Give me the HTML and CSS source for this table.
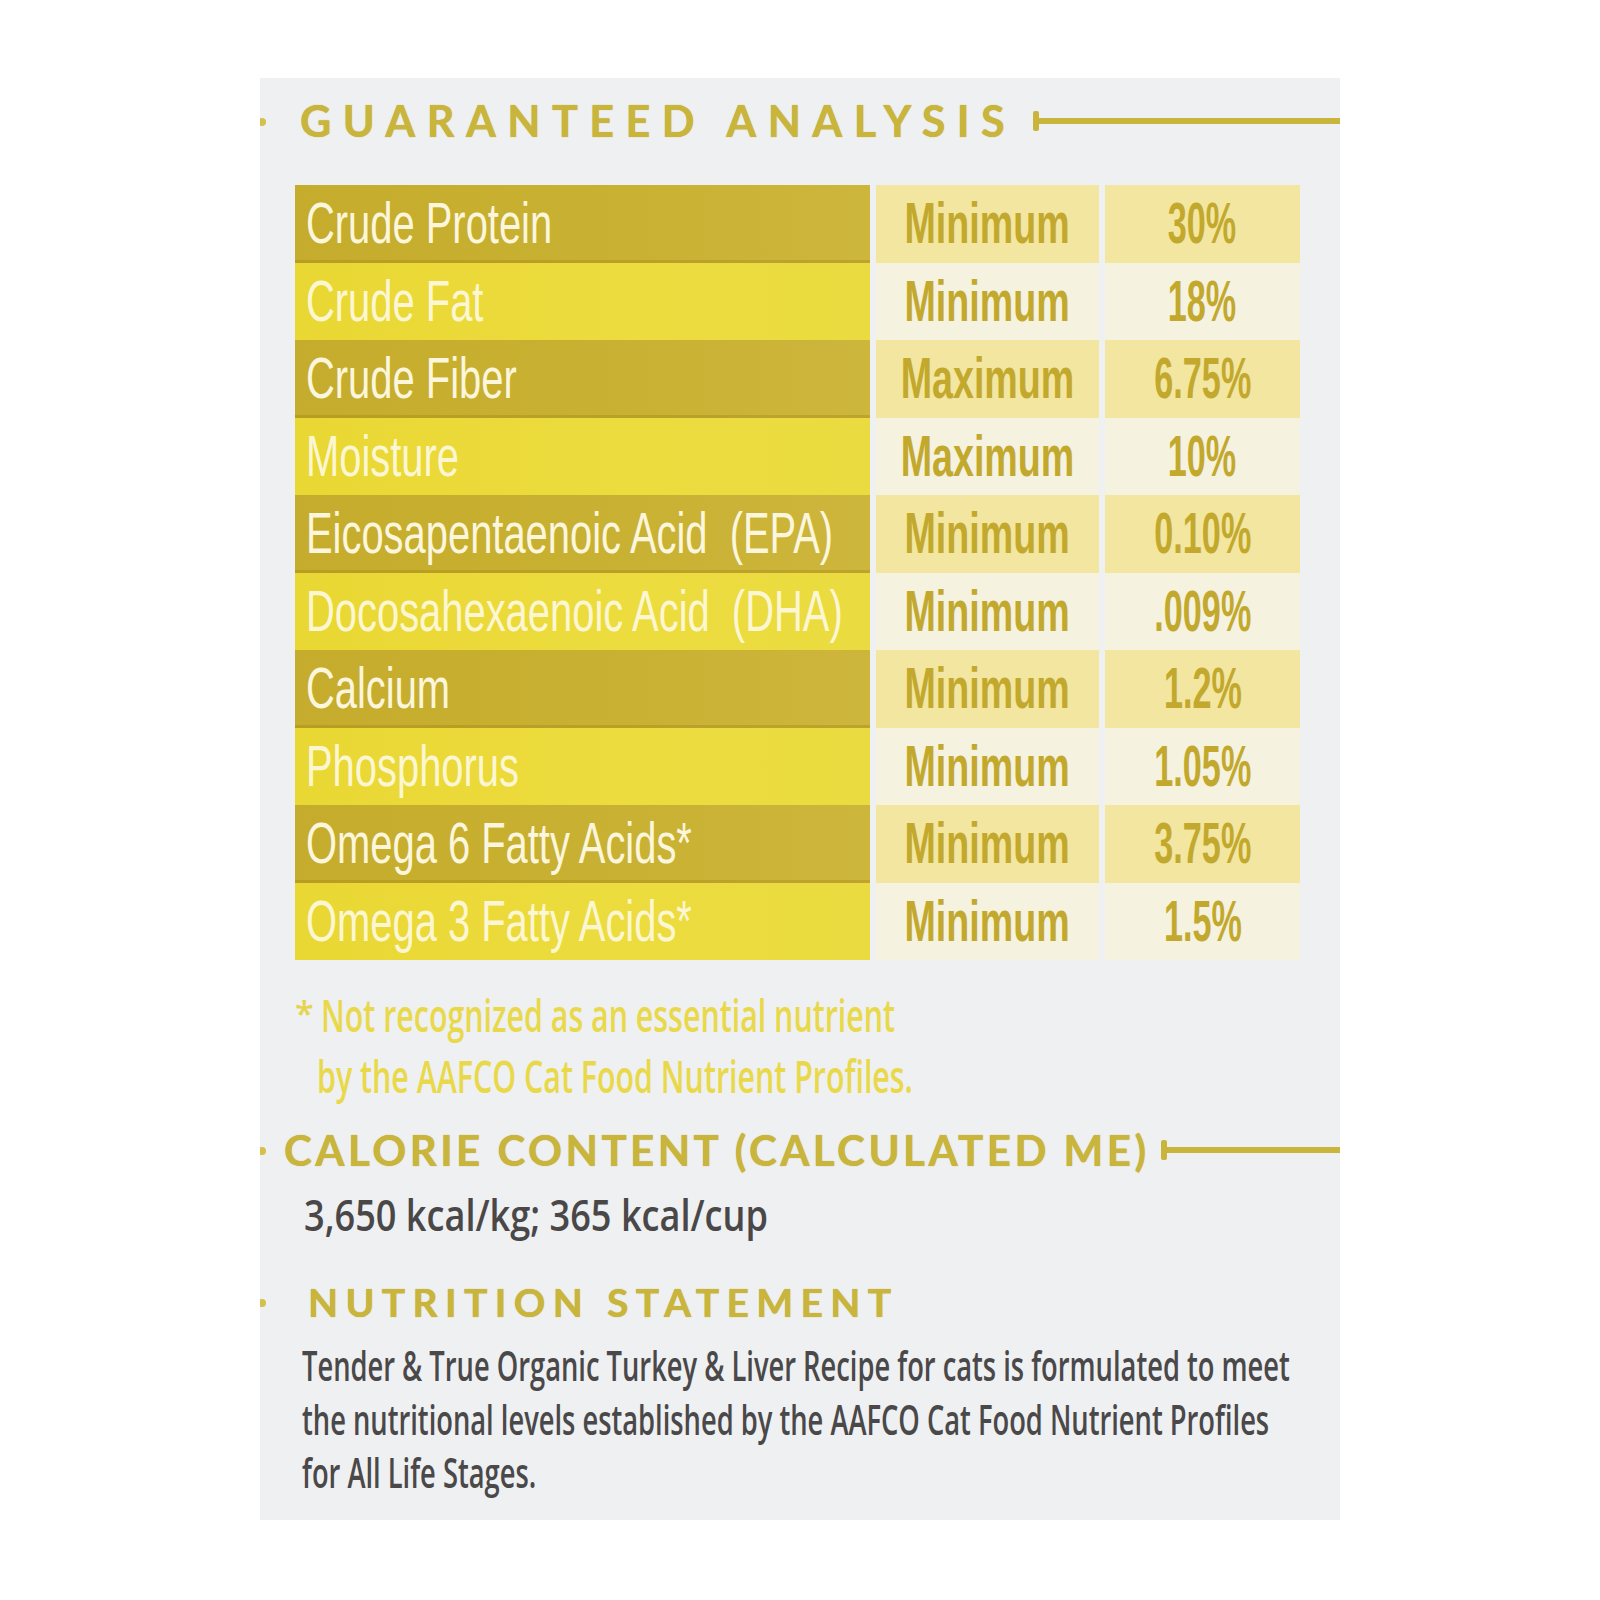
FILE: index.html
```html
<!DOCTYPE html>
<html lang="en">
<head>
<meta charset="utf-8">
<title>Guaranteed Analysis</title>
<link rel="stylesheet" href="styles.css">
</head>
<body>
<div class="panel">
  <div class="heading heading-ga">
    <span class="heading-text">GUARANTEED ANALYSIS</span>
    <span class="rule rule-ga"></span>
  </div>

  <div class="analysis">
    <div class="row dark"><div class="name"><span>Crude Protein</span></div><div class="kind"><span>Minimum</span></div><div class="val"><span>30%</span></div></div>
    <div class="row light"><div class="name"><span>Crude Fat</span></div><div class="kind"><span>Minimum</span></div><div class="val"><span>18%</span></div></div>
    <div class="row dark"><div class="name"><span>Crude Fiber</span></div><div class="kind"><span>Maximum</span></div><div class="val"><span>6.75%</span></div></div>
    <div class="row light"><div class="name"><span>Moisture</span></div><div class="kind"><span>Maximum</span></div><div class="val"><span>10%</span></div></div>
    <div class="row dark"><div class="name"><span>Eicosapentaenoic Acid&nbsp; (EPA)</span></div><div class="kind"><span>Minimum</span></div><div class="val"><span>0.10%</span></div></div>
    <div class="row light"><div class="name"><span>Docosahexaenoic Acid&nbsp; (DHA)</span></div><div class="kind"><span>Minimum</span></div><div class="val"><span>.009%</span></div></div>
    <div class="row dark"><div class="name"><span>Calcium</span></div><div class="kind"><span>Minimum</span></div><div class="val"><span>1.2%</span></div></div>
    <div class="row light"><div class="name"><span>Phosphorus</span></div><div class="kind"><span>Minimum</span></div><div class="val"><span>1.05%</span></div></div>
    <div class="row dark"><div class="name"><span>Omega 6 Fatty Acids*</span></div><div class="kind"><span>Minimum</span></div><div class="val"><span>3.75%</span></div></div>
    <div class="row light"><div class="name"><span>Omega 3 Fatty Acids*</span></div><div class="kind"><span>Minimum</span></div><div class="val"><span>1.5%</span></div></div>
  </div>

  <div class="footnote">
    <div class="foot-line first"><span class="ast">*</span><span class="sx">Not recognized as an essential nutrient</span></div>
    <div class="foot-line second"><span class="sx">by the AAFCO Cat Food Nutrient Profiles.</span></div>
  </div>

  <div class="heading heading-cal">
    <span class="heading-text">CALORIE CONTENT (CALCULATED ME)</span>
    <span class="rule rule-cal"></span>
  </div>

  <div class="kcal"><span class="sx">3,650 kcal/kg; 365 kcal/cup</span></div>

  <div class="heading heading-nut">
    <span class="heading-text">NUTRITION STATEMENT</span>
  </div>

  <div class="statement">
    <div class="st-line"><span class="sx">Tender &amp; True Organic Turkey &amp; Liver Recipe for cats is formulated to meet</span></div>
    <div class="st-line"><span class="sx">the nutritional levels established by the AAFCO Cat Food Nutrient Profiles</span></div>
    <div class="st-line"><span class="sx">for All Life Stages.</span></div>
  </div>
</div>
</body>
</html>
```
FILE: styles.css
```css
html, body {
  margin: 0;
  padding: 0;
  background: #ffffff;
}

body {
  font-family: "Open Sans", "Liberation Sans", sans-serif;
  overflow: hidden;
}

.panel {
  width: 1080px;
  height: 1442px;
  margin: 78px 0 0 260px;
  background: #eef0f2;
  overflow: hidden;
  position: relative;
}

/* ---------- headings ---------- */
.heading {
  position: relative;
  display: flex;
  align-items: center;
  height: 44px;
  line-height: 44px;
  font-family: "Lato", "Open Sans", sans-serif;
  font-weight: 700;
  color: #cab53c;
  text-shadow: 0 0 1px #b8a02a;
  white-space: nowrap;
}

.heading::before {
  content: "";
  position: absolute;
  left: -2px;
  top: 50%;
  width: 8px;
  height: 8px;
  margin-top: -3px;
  border-radius: 50%;
  background: #d4c04a;
}

.heading-ga {
  margin-top: 21px;
  padding-left: 40px;
  font-size: 43px;
  letter-spacing: 11.5px;
}

.heading-cal {
  margin-top: 25px;
  padding-left: 24px;
  font-size: 42px;
  letter-spacing: 3.5px;
}

.heading-nut {
  margin-top: 40px;
  padding-left: 48px;
  font-size: 39px;
  letter-spacing: 7.4px;
}

.rule {
  position: relative;
  flex: 1;
  height: 6px;
  background: #cab53c;
}

.rule::before {
  content: "";
  position: absolute;
  left: 0;
  top: -7px;
  width: 6px;
  height: 20px;
  border-radius: 2px;
  background: #cab53c;
}

.rule-ga {
  margin-left: 17px;
}

.rule-cal {
  margin-left: 12px;
}

/* ---------- analysis table ---------- */
.analysis {
  margin: 42px 0 0 35px;
  width: 1005px;
}

.row {
  display: grid;
  grid-template-columns: 575px 223px 195px;
  column-gap: 6px;
  height: 77.5px;
}

.name, .kind, .val {
  display: flex;
  align-items: center;
  font-family: "Liberation Sans", "Arial", sans-serif;
  font-size: 57px;
  line-height: 1;
  white-space: nowrap;
}

.name {
  padding-left: 11px;
  color: #fbf6dc;
}

.name span {
  display: inline-block;
  transform: scaleX(0.70);
  transform-origin: left center;
}

.kind, .val {
  justify-content: center;
  font-weight: 700;
  color: #c2a92e;
}

.kind span {
  display: inline-block;
  transform: scaleX(0.66);
  transform-origin: center center;
}

.val span {
  display: inline-block;
  transform: scaleX(0.60);
  transform-origin: center center;
}

.row.dark .name {
  background: linear-gradient(90deg, #c5ac2c 0%, #c9b133 60%, #cdb63c 100%);
  box-shadow: inset 0 -3px 0 rgba(150, 120, 10, 0.28);
}

.row.light .name {
  background: linear-gradient(90deg, #e9d733 0%, #ecdc3e 60%, #eadb40 100%);
  color: #fcf7d2;
}

.row.dark .kind, .row.dark .val {
  background: #f2e6a0;
}

.row.light .kind, .row.light .val {
  background: #f5f2df;
}

/* ---------- footnote ---------- */
.footnote {
  margin-top: 26px;
  font-size: 46px;
  font-weight: 600;
  line-height: 56px;
  color: #e9d94a;
  white-space: nowrap;
}

.foot-line {
  display: flex;
  align-items: baseline;
}

.foot-line.first {
  padding-left: 35px;
}

.foot-line.second {
  padding-left: 57px;
}

.ast {
  display: inline-block;
  width: 26px;
  font-size: 34px;
  color: #e6d34e;
  position: relative;
  top: -6px;
}

.sx {
  display: inline-block;
  transform-origin: left center;
}

.footnote .sx {
  transform: scaleX(0.66);
}

/* ---------- calorie ---------- */
.kcal {
  margin-top: 18px;
  padding-left: 44px;
  font-size: 43px;
  font-weight: 600;
  line-height: 50px;
  color: #4a4748;
  white-space: nowrap;
}

.kcal .sx {
  transform: scaleX(0.84);
}

/* ---------- statement ---------- */
.statement {
  margin-top: 14px;
  padding-left: 42px;
  font-size: 42px;
  font-weight: 600;
  line-height: 53.5px;
  color: #4a4849;
  white-space: nowrap;
}

.statement .sx {
  transform: scaleX(0.65);
}
```
